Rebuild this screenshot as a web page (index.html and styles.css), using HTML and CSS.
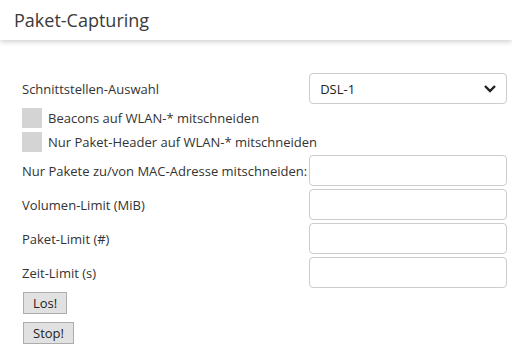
FILE: index.html
```html
<!DOCTYPE html>
<html lang="de">
<head>
    <meta charset="UTF-8">
    <title>Paket-Capturing</title>
    <link rel="stylesheet" href="styles.css">
</head>
<body>
    <header>
        <h1>Paket-Capturing</h1>
    </header>
    <main>
        <form class="capture-form">
            <label for="iface">Schnittstellen-Auswahl</label>
            <div class="select-wrap">
                <select id="iface">
                    <option>DSL-1</option>
                </select>
                <svg class="chevron" width="14" height="9" viewBox="0 0 14 9"><path d="M2 2 L7 7 L12 2" fill="none" stroke="#222" stroke-width="2.4"/></svg>
            </div>

            <label class="check-row"><input type="checkbox"> Beacons auf WLAN-* mitschneiden</label>
            <label class="check-row"><input type="checkbox"> Nur Paket-Header auf WLAN-* mitschneiden</label>

            <label for="mac">Nur Pakete zu/von MAC-Adresse mitschneiden:</label>
            <input type="text" id="mac">

            <label for="vol">Volumen-Limit (MiB)</label>
            <input type="text" id="vol">

            <label for="pkt">Paket-Limit (#)</label>
            <input type="text" id="pkt">

            <label for="time">Zeit-Limit (s)</label>
            <input type="text" id="time">

            <div class="buttons">
                <button type="button">Los!</button>
                <button type="button">Stop!</button>
            </div>
        </form>
    </main>
</body>
</html>
```

FILE: styles.css
```css
body {
    font-family: "Open Sans", sans-serif;
    font-size: 13px;
    color: #333;
    margin: 0;
    background-color: #fff;
}

header {
    height: 40px;
    padding: 0 14px;
    box-shadow: 0 2px 5px rgba(0, 0, 0, 0.18);
}

header h1 {
    margin: 0;
    font-size: 18px;
    font-weight: normal;
    line-height: 40px;
    color: #3a3a3a;
}

main {
    padding: 33px 4px 0 22px;
}

.capture-form {
    display: grid;
    grid-template-columns: max-content 198px;
    column-gap: 2px;
    row-gap: 3px;
    align-items: center;
}

.select-wrap {
    position: relative;
    margin-bottom: 0;
}

select {
    width: 100%;
    height: 31px;
    appearance: none;
    font-family: inherit;
    font-size: 13px;
    color: #222;
    background: #fff;
    border: 1px solid #ccc;
    border-radius: 4px;
    padding: 0 10px;
}

.chevron {
    position: absolute;
    right: 10px;
    top: 11px;
}

.check-row {
    grid-column: 1 / 3;
    display: flex;
    align-items: center;
    gap: 6px;
    height: 20px;
    margin-top: 1px;
}

.check-row input {
    appearance: none;
    width: 20px;
    height: 20px;
    margin: 0;
    background: #d4d4d4;
}

.capture-form input[type="text"] {
    height: 31px;
    box-sizing: border-box;
    border: 1px solid #ccc;
    border-radius: 4px;
    margin: 0;
}

.buttons {
    grid-column: 1 / 3;
    display: flex;
    flex-direction: column;
    align-items: flex-start;
    gap: 8px;
    padding-top: 1px;
}

.buttons button {
    font-family: inherit;
    font-size: 13px;
    color: #222;
    height: 22px;
    padding: 0 9px;
    margin-left: 1px;
    background: #e1e1e1;
    border: 1px solid #adadad;
    border-radius: 0;
}
```
